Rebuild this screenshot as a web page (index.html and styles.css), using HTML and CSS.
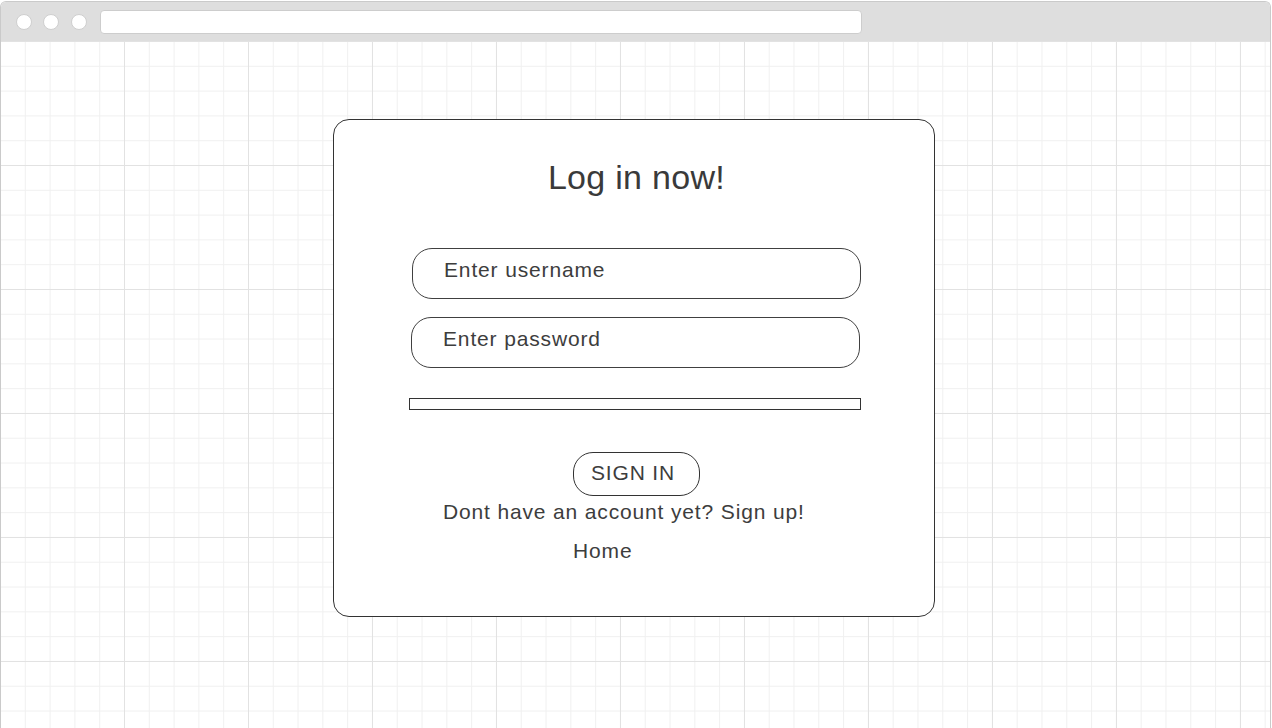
FILE: index.html
```html
<!DOCTYPE html>
<html lang="en">
<head>
<meta charset="utf-8">
<title>Log in</title>
<link rel="stylesheet" href="styles.css">
</head>
<body>
<div class="window">
  <div class="chrome">
    <span class="dot"></span>
    <span class="dot"></span>
    <span class="dot"></span>
    <div class="address"></div>
  </div>
  <main class="canvas">
    <section class="card">
      <div class="column">
        <h1 class="title">Log in now!</h1>
        <div class="field">Enter username</div>
        <div class="field field-pass">Enter password</div>
        <div class="bar"></div>
        <button class="signin" type="button">SIGN IN</button>
        <p class="signup">Dont have an account yet? Sign up!</p>
        <p class="home">Home</p>
      </div>
    </section>
  </main>
</div>
</body>
</html>
```
FILE: styles.css
```css
* { box-sizing: border-box; }

html, body {
  margin: 0;
  padding: 0;
  background: #ffffff;
  height: 100%;
}

body {
  font-family: "Liberation Sans", Arial, sans-serif;
  color: #3d3d3d;
  overflow: hidden;
}

.window {
  margin: 1px 1px 0 0;
  border: 1px solid #cacaca;
  border-bottom: none;
  border-radius: 6px 6px 0 0;
  height: 727px;
  display: flex;
  flex-direction: column;
  overflow: hidden;
}

.chrome {
  height: 39px;
  flex: none;
  background: #dedede;
  display: flex;
  align-items: center;
  padding-left: 15px;
}

.dot {
  width: 16px;
  height: 16px;
  border-radius: 50%;
  background: #ffffff;
  border: 1px solid #cfcfcf;
  margin-right: 11px;
  flex: none;
}

.dot:nth-child(2) { margin-right: 12px; }
.dot:nth-child(3) { margin-right: 13px; }

.address {
  width: 762px;
  height: 24px;
  background: #ffffff;
  border: 1px solid #cdcdcd;
  border-radius: 4px;
}

.canvas {
  flex: 1;
  background-color: #ffffff;
  background-image:
    linear-gradient(to right, #e2e2e2 1px, transparent 1px),
    linear-gradient(to bottom, #e2e2e2 1px, transparent 1px),
    linear-gradient(to right, #f0f0f0 1px, transparent 1px),
    linear-gradient(to bottom, #f0f0f0 1px, transparent 1px);
  background-size: 124px 124px, 124px 124px, 24.8px 24.8px, 24.8px 24.8px;
  background-position: -1px 0, -1px 0, -1px 0, -1px 0;
  padding-top: 78px;
  padding-left: 332px;
}

.card {
  width: 602px;
  height: 498px;
  background: #ffffff;
  border: 1px solid #333333;
  border-radius: 16px;
  padding: 37px 0 0 78px;
}

.column {
  width: 449px;
  display: flex;
  flex-direction: column;
  align-items: flex-start;
}

.title {
  align-self: stretch;
  margin: 0;
  text-align: center;
  font-size: 34px;
  line-height: 40px;
  font-weight: normal;
  letter-spacing: 0.3px;
  color: #3a3a3a;
}

.field {
  width: 449px;
  height: 51px;
  border: 1px solid #404040;
  border-radius: 20px;
  padding: 9px 0 0 31px;
  font-size: 21px;
  line-height: 24px;
  letter-spacing: 0.85px;
  margin-top: 51px;
}

.field-pass {
  margin-top: 18px;
  margin-left: -1px;
}

.bar {
  width: 452px;
  height: 12px;
  border: 1px solid #333333;
  margin: 30px 0 0 -3px;
}

.signin {
  align-self: center;
  margin-top: 42px;
  width: 127px;
  height: 44px;
  border: 1px solid #333333;
  border-radius: 20px;
  background: #ffffff;
  font-family: "Liberation Sans", Arial, sans-serif;
  color: #3d3d3d;
  font-size: 21px;
  line-height: 24px;
  letter-spacing: 0.85px;
  padding: 0 7px 2px 0;
  cursor: pointer;
}

.signup,
.home {
  margin: 0;
  font-size: 21px;
  line-height: 24px;
  letter-spacing: 0.85px;
}

.signup {
  margin-top: 4px;
  margin-left: 31px;
}

.home {
  margin-top: 15px;
  margin-left: 161px;
}
```
